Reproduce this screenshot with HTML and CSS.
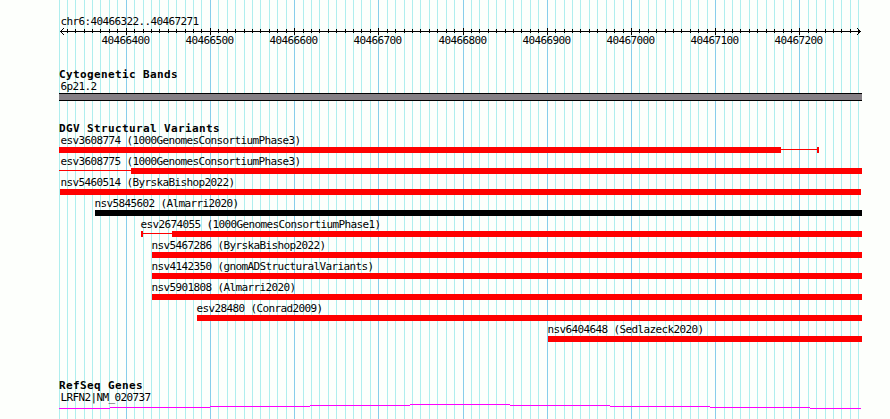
FILE: index.html
```html
<!DOCTYPE html>
<html lang="en">
<head>
<meta charset="utf-8">
<title>chr6:40466322..40467271</title>
<link rel="stylesheet" href="styles.css">
</head>
<body>
<main class="browser">
  <svg class="grid" width="890" height="419" shape-rendering="crispEdges" aria-hidden="true"><path class="grid-minor"/><path class="grid-major"/></svg>

  <header class="region">
    <div class="label">chr6:40466322..40467271</div>
    <svg class="ruler" width="890" height="18"><g shape-rendering="crispEdges"><path class="axis" d="M60 3h801v1H60z"/><path class="ticks"/><path class="arrows" d="M61 2h1v1h-1zM62 1h1v1h-1zM63 0h1v1h-1zM61 4h1v1h-1zM62 5h1v1h-1zM63 6h1v1h-1zM859 2h1v1h-1zM858 1h1v1h-1zM857 0h1v1h-1zM859 4h1v1h-1zM858 5h1v1h-1zM857 6h1v1h-1z"/></g><g class="numbers"></g></svg>
  </header>

  <section class="track cytoband">
    <h2 class="title">Cytogenetic Bands</h2>
    <div class="label">6p21.2</div>
    <div class="band"></div>
  </section>

  <section class="track variants">
    <h2 class="title">DGV Structural Variants</h2>
    <div class="rows"></div>
  </section>

  <section class="track genes">
    <h2 class="title">RefSeq Genes</h2>
    <div class="label">LRFN2|NM_020737</div>
    <svg class="intron" width="803" height="5" shape-rendering="crispEdges"><path d="M0 4h51v1H0zM51 3h100v1H51zM151 2h100v1H151zM251 1h100v1H251zM351 0h100v1H351zM451 1h100v1H451zM551 2h100v1H551zM651 3h100v1H651zM751 4h51v1H751z"/></svg>
  </section>
</main>
<script src="script.js"></script>
</body>
</html>
```
FILE: styles.css
```css
* {
  box-sizing: border-box;
}

body {
  margin: 0;
  background: #fdfffc;
  color: #000;
  font-family: "DejaVu Sans Mono", monospace;
  font-size: 11px;
  line-height: 13px;
  letter-spacing: -0.622px;
}

.browser {
  position: relative;
  width: 890px;
  height: 419px;
  padding-top: 15px;
  overflow: hidden;
}

.grid {
  position: absolute;
  inset: 0;
  z-index: -1;
}

.grid-minor {
  fill: #afeeee;
}

.grid-major {
  fill: #87ceeb;
}

.region {
  height: 54px;
}

.region .label {
  padding-left: 60.5px;
}

.ruler {
  display: block;
}

.track {
  margin-left: 59px;
  width: 803px;
}

.track > .label {
  padding-left: 1.5px;
}

.title {
  margin: 0;
  font-size: 11px;
  line-height: 11px;
  font-weight: bold;
  letter-spacing: 0.378px;
}

.cytoband {
  height: 54px;
}

.band {
  height: 8px;
  background: #858085;
  border: solid #000;
  border-width: 1px 0;
}

.variants {
  height: 257px;
}

.rows {
  display: grid;
  grid-auto-rows: 19px;
  row-gap: 2px;
}

.label {
  height: 13px;
  white-space: pre;
}

.glyph {
  display: flex;
  height: 6px;
}

.solid {
  background: #f00;
}

.solid.black {
  background: #000;
}

.thin {
  height: 1px;
  margin-top: 2px;
  background: #f00;
}

.intron {
  display: block;
  fill: #f0f;
}
```
FILE: script.js
```js
const regionStart = 40466322;
const regionEnd = 40467271;
const scale = 800 / 950;
const left = 59;

const toX = (pos) => Math.max(left, Math.round(60 + (pos - regionStart) * scale));

let minor = "";
let major = "";
let ticks = "";
let numbers = "";
for (let pos = 40466320; pos <= regionEnd; pos += 10) {
  const x = toX(pos);
  if (pos % 100 === 0) {
    major += `M${x} 0h1v419h-1z`;
    ticks += `M${x} 0h1v7h-1z`;
    numbers += `<text x="${x - 24.5}" y="16">${pos}</text>`;
  } else {
    minor += `M${x} 0h1v419h-1z`;
    if (pos > regionStart) ticks += `M${x} 1h1v4h-1z`;
  }
}
document.querySelector(".grid-minor").setAttribute("d", minor);
document.querySelector(".grid-major").setAttribute("d", major);
document.querySelector(".ticks").setAttribute("d", ticks);
document.querySelector(".numbers").innerHTML = numbers;

// Each part is [kind, start, end].
const variants = [
  ["esv3608774 (1000GenomesConsortiumPhase3)", 60.5, [["solid", 59, 781], ["thin", 781, 817], ["solid", 817, 819]]],
  ["esv3608775 (1000GenomesConsortiumPhase3)", 60.5, [["thin", 59, 131], ["solid", 131, 862]]],
  ["nsv5460514 (ByrskaBishop2022)", 60.5, [["solid", 60, 861]]],
  ["nsv5845602 (Almarri2020)", 94.5, [["solid black", 95, 862]]],
  ["esv2674055 (1000GenomesConsortiumPhase1)", 140.5, [["solid", 141, 143], ["thin", 143, 172], ["solid", 172, 862]]],
  ["nsv5467286 (ByrskaBishop2022)", 151.5, [["solid", 152, 862]]],
  ["nsv4142350 (gnomADStructuralVariants)", 151.5, [["solid", 152, 862]]],
  ["nsv5901808 (Almarri2020)", 151.5, [["solid", 152, 862]]],
  ["esv28480 (Conrad2009)", 196.5, [["solid", 197, 862]]],
  ["nsv6404648 (Sedlazeck2020)", 547.5, [["solid", 548, 862]]]
];

document.querySelector(".rows").innerHTML = variants.map(([name, labelX, parts]) => `
  <div class="variant">
    <div class="label" style="padding-left:${labelX - left}px">${name}</div>
    <div class="glyph" style="padding-left:${parts[0][1] - left}px">${parts.map(([kind, a, b]) => `<div class="${kind}" style="width:${b - a}px"></div>`).join("")}</div>
  </div>`).join("");
```
